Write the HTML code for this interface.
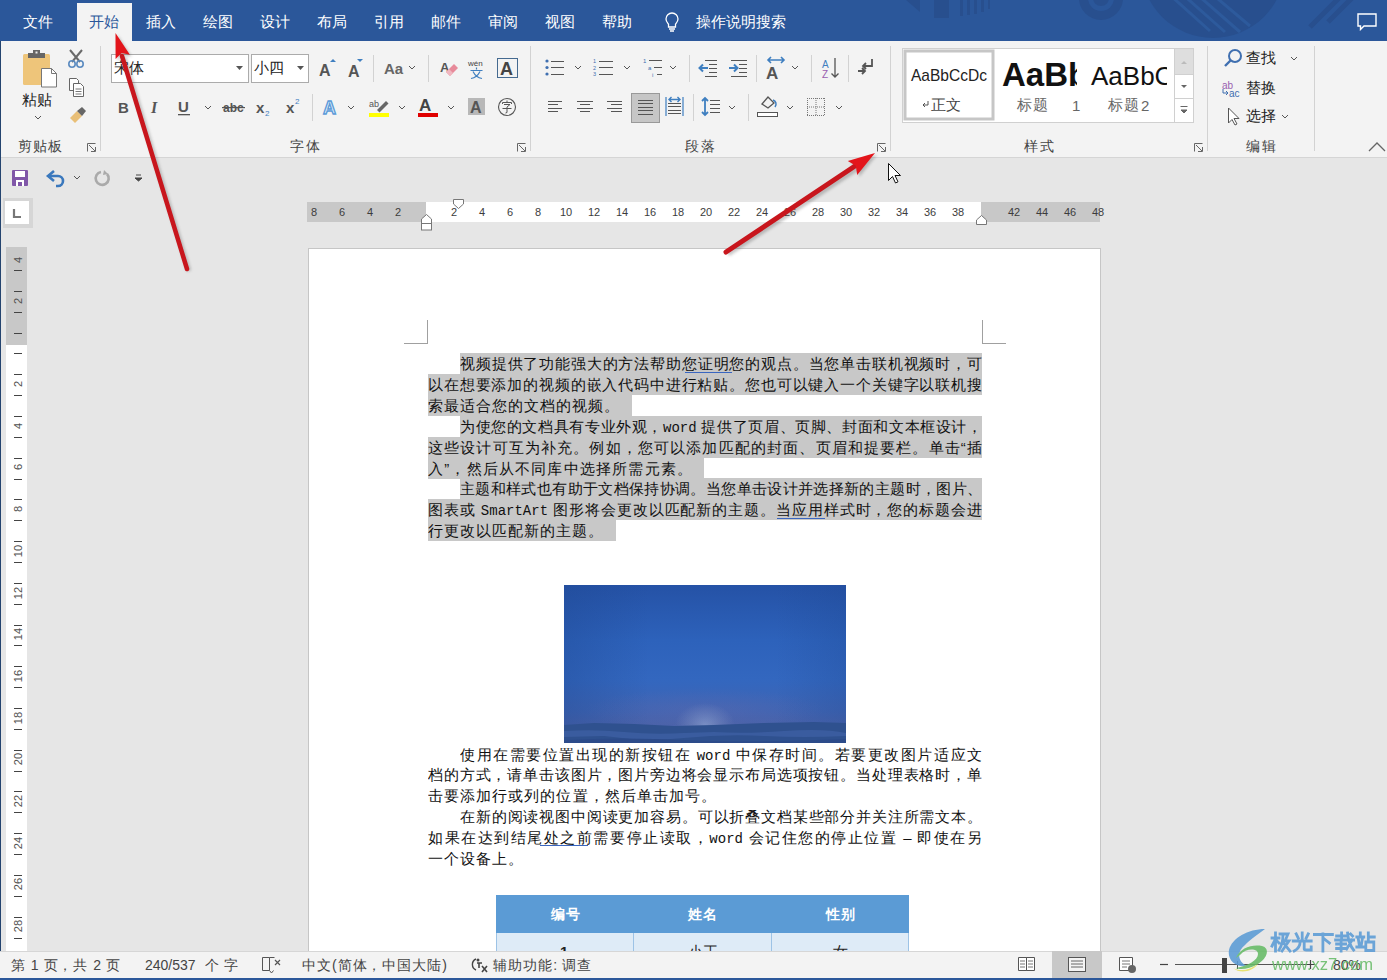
<!DOCTYPE html>
<html><head><meta charset="utf-8">
<style>
@font-face{font-family:"TofuBig";src:local("Liberation Sans");size-adjust:125%;unicode-range:U+3000-9FFF,U+FF00-FFEF}
*{margin:0;padding:0;box-sizing:border-box}
html,body{width:1387px;height:980px;overflow:hidden;background:#e6e6e6;font-family:"TofuBig","Liberation Sans",sans-serif;position:relative}
.a{position:absolute}
#title{left:0;top:0;width:1387px;height:41px;background:#2b579a;overflow:hidden}
.tab{position:absolute;top:12px;color:#fff;font-size:15px;line-height:20px;white-space:nowrap;width:30px;text-align:justify;text-align-last:justify}
.j{text-align:justify;text-align-last:justify;white-space:nowrap;overflow:visible}
#ribbon{left:0;top:41px;width:1387px;height:117px;background:#f3f3f3;border-bottom:1px solid #d5d5d5}
.sep{position:absolute;width:1px;background:#d0d0d0}
.gl{position:absolute;top:137px;font-size:14px;line-height:18px;color:#444;white-space:nowrap}
.launch{position:absolute;top:142px;width:10px;height:10px}
#page{left:308px;top:248px;width:793px;height:740px;background:#fff;border:1px solid #c6c6c6}
#status{left:0;top:951px;width:1387px;height:29px;background:#f3f3f3;border-top:1px solid #d6d6d6;border-bottom:2px solid #2b579a}
.st{position:absolute;top:6px;font-size:14px;line-height:16px;color:#444;white-space:nowrap}
.ln{position:absolute;height:21px;font-size:15px;line-height:21px;color:#111;white-space:nowrap;overflow:hidden;text-align:justify;text-align-last:justify}
.hl{background:#c8c8c8}
.m{font-family:"Liberation Mono",monospace;font-size:14px}
.rn{position:absolute;top:205px;font-size:11px;line-height:14px;color:#3c3c3c;width:20px;text-align:center}
</style></head><body>
<div id="title" class="a">
<svg class="a" style="left:0;top:0" width="1387" height="41">
<g fill="#284f8e">
<path d="M906 0h14v12z"/>
<rect x="934" y="0" width="15" height="18"/>
<rect x="960" y="0" width="3" height="16"/><rect x="967" y="0" width="3" height="15"/><rect x="974" y="0" width="3" height="14"/><rect x="981" y="0" width="3" height="12"/><rect x="988" y="0" width="2" height="9"/>
<circle cx="1101" cy="-2" r="22"/>
<circle cx="1213" cy="-34" r="72"/>
</g><g stroke="#284f8e" stroke-width="5"><path d="M1310 27l30-30M1328 22l26-26"/>
</g>
<circle cx="1101" cy="-2" r="13" fill="#2b579a"/>
<circle cx="1101" cy="-2" r="8" fill="#284f8e"/>
<g stroke="#2d5a9c" stroke-width="3">
<path d="M1170 -5l40 36M1180 -8l45 40M1192 -10l48 42M1205 -12l45 38"/>
</g>
</svg>
<div class="tab" style="left:23px">文件</div>
<div class="a" style="left:77px;top:3px;width:55px;height:38px;background:#f3f3f3"></div>
<div class="tab" style="left:89px;color:#2b579a">开始</div>
<div class="tab" style="left:146px">插入</div>
<div class="tab" style="left:203px">绘图</div>
<div class="tab" style="left:260px">设计</div>
<div class="tab" style="left:317px">布局</div>
<div class="tab" style="left:374px">引用</div>
<div class="tab" style="left:431px">邮件</div>
<div class="tab" style="left:488px">审阅</div>
<div class="tab" style="left:545px">视图</div>
<div class="tab" style="left:602px">帮助</div>
<svg class="a" style="left:662px;top:11px" width="20" height="22"><path d="M10 2a6 6 0 0 0-6 6c0 2.5 1.5 3.8 2.5 5.2V16h7v-2.8C14.5 11.8 16 10.5 16 8a6 6 0 0 0-6-6z" fill="none" stroke="#fff" stroke-width="1.3"/><path d="M7 18h6M8 20h4" stroke="#fff" stroke-width="1.3"/></svg>
<div class="tab" style="left:696px;width:90px">操作说明搜索</div>
<svg class="a" style="left:1357px;top:13px" width="20" height="18"><path d="M1 1h18v12H7l-3.5 3.5V13H1z" fill="none" stroke="#fff" stroke-width="1.4"/></svg>
</div>
<div id="ribbon" class="a">
<svg class="a" style="left:0;top:-41px" width="1387" height="160">
<!-- separators -->
<g fill="#d2d2d2">
<rect x="100" y="46" width="1" height="105"/>
<rect x="530" y="46" width="1" height="105"/>
<rect x="890" y="46" width="1" height="105"/>
<rect x="1207" y="46" width="1" height="105"/>
<rect x="1314" y="46" width="1" height="105"/>
<rect x="373" y="55" width="1" height="27"/>
<rect x="428" y="55" width="1" height="27"/>
<rect x="312" y="94" width="1" height="27"/>
<rect x="689" y="55" width="1" height="27"/>
<rect x="756" y="55" width="1" height="27"/>
<rect x="811" y="55" width="1" height="27"/>
<rect x="848" y="55" width="1" height="27"/>
<rect x="693" y="94" width="1" height="27"/>
<rect x="748" y="94" width="1" height="27"/>
</g>
<!-- launchers -->
<g fill="none" stroke="#666" stroke-width="1">
<path d="M87.5 151.5v-8h8 M89 145l6 6 M95.5 147v4.5H91"/>
<path d="M517.5 151.5v-8h8 M519 145l6 6 M525.5 147v4.5H521"/>
<path d="M877.5 151.5v-8h8 M879 145l6 6 M885.5 147v4.5H881"/>
<path d="M1194.5 151.5v-8h8 M1196 145l6 6 M1202.5 147v4.5H1198"/>
<path d="M1369 151l8-8 8 8" stroke-width="1.3"/>
</g>
<!-- paste -->
<rect x="23" y="54" width="27" height="31" rx="1.5" fill="#eec57a"/>
<rect x="28" y="53" width="17" height="5" fill="#666"/>
<rect x="33" y="50" width="7" height="4" fill="#666"/><rect x="35.5" y="51.5" width="2" height="2" fill="#eee"/>
<path d="M41.5 68.5h10l5 5v13.5h-15z" fill="#fff" stroke="#777"/>
<path d="M51.5 68.5v5h5" fill="none" stroke="#777"/>
<path d="M35 116l3 3 3-3" fill="none" stroke="#555" stroke-width="1"/>
<!-- scissors -->
<path d="M70 50l10 12 M82 50l-10 12" stroke="#6a6a6a" stroke-width="2"/>
<circle cx="72" cy="64" r="3.2" fill="none" stroke="#5b8bc0" stroke-width="1.6"/>
<circle cx="80" cy="64" r="3.2" fill="none" stroke="#5b8bc0" stroke-width="1.6"/>
<!-- copy -->
<path d="M69.5 78.5h7l2 2v10h-9z" fill="#fff" stroke="#666"/>
<path d="M73.5 83.5h7l3 3v10h-10z" fill="#fff" stroke="#666"/>
<path d="M75.5 89h6M75.5 91.5h6M75.5 94h6" stroke="#777" stroke-width="1"/>
<!-- format painter -->
<path d="M70 118l7-7 5 5-7 7z" fill="#e9bf77"/>
<path d="M77 111l5-4 4 4-4 5z" fill="#666"/>
<!-- font combos -->
<rect x="111.5" y="54.5" width="137" height="28" fill="#fff" stroke="#ababab"/>
<path d="M236 66h7l-3.5 4z" fill="#555"/>
<rect x="251.5" y="54.5" width="57" height="28" fill="#fff" stroke="#ababab"/>
<path d="M297 66h7l-3.5 4z" fill="#555"/>
<!-- grow/shrink -->
<text x="319" y="76" font-family="Liberation Sans" font-size="16" font-weight="bold" fill="#555">A</text>
<path d="M330 62l3-3 3 3z" fill="#3f7fc0"/>
<text x="348" y="77" font-family="Liberation Sans" font-size="16" font-weight="bold" fill="#555">A</text>
<path d="M357 59h6l-3 3z" fill="#3f7fc0"/>
<text x="384" y="74" font-family="Liberation Sans" font-size="15" font-weight="bold" fill="#666">Aa</text>
<path d="M409 66l3 3 3-3" fill="none" stroke="#555"/>
<!-- clear formatting -->
<text x="440" y="72" font-family="Liberation Sans" font-size="13" font-weight="bold" fill="#555">A</text>
<path d="M446 72l8-8 4 4-8 8z" fill="#e78a9a"/><path d="M446 72l3-3 4 4-3 3z" fill="#f0b7c0"/>
<!-- wen -->
<text x="468" y="66" font-family="Liberation Sans" font-size="8" fill="#444">wén</text>
<path d="M476.5 67.5v2M470.5 70.5h12M473 71.5q3 6 9 7M480 71.5q-3 6-9 7" fill="none" stroke="#3f7fc0" stroke-width="1.2"/>
<!-- boxed A -->
<rect x="497.5" y="58.5" width="20" height="19" fill="none" stroke="#456a90"/>
<text x="500" y="75" font-family="Liberation Sans" font-size="18" font-weight="bold" fill="#444">A</text>
<!-- row 2 font -->
<text x="118" y="113" font-family="Liberation Sans" font-size="15" font-weight="bold" fill="#555">B</text>
<text x="151" y="113" font-family="Liberation Serif" font-size="16" font-style="italic" font-weight="bold" fill="#555">I</text>
<text x="178" y="112" font-family="Liberation Sans" font-size="15" font-weight="bold" fill="#555">U</text>
<rect x="178" y="114" width="12" height="1.3" fill="#555"/>
<path d="M205 106l3 3 3-3" fill="none" stroke="#555"/>
<text x="223" y="112" font-family="Liberation Sans" font-size="12" font-weight="bold" fill="#555">abc</text>
<rect x="222" y="107" width="23" height="1.2" fill="#555"/>
<text x="256" y="113" font-family="Liberation Sans" font-size="15" font-weight="bold" fill="#555">x</text>
<text x="265" y="116" font-family="Liberation Sans" font-size="8" fill="#3f7fc0">2</text>
<text x="286" y="113" font-family="Liberation Sans" font-size="15" font-weight="bold" fill="#555">x</text>
<text x="295" y="104" font-family="Liberation Sans" font-size="8" fill="#3f7fc0">2</text>
<!-- text effect -->
<text x="323" y="114" font-family="Liberation Sans" font-size="18" font-weight="bold" fill="#dceaf8" stroke="#5a9ad8" stroke-width="1.3">A</text>
<path d="M348 106l3 3 3-3" fill="none" stroke="#555"/>
<!-- highlighter -->
<text x="369" y="107" font-family="Liberation Sans" font-size="9" fill="#555">ab</text>
<path d="M377 110l9-9 2.5 2.5-9 9z" fill="#666"/>
<rect x="369" y="113" width="20" height="4" fill="#ffff00"/>
<path d="M399 106l3 3 3-3" fill="none" stroke="#555"/>
<!-- font color -->
<text x="419" y="111" font-family="Liberation Sans" font-size="17" font-weight="bold" fill="#444">A</text>
<rect x="418" y="113" width="20" height="4" fill="#e00000"/>
<path d="M448 106l3 3 3-3" fill="none" stroke="#555"/>
<!-- shading -->
<rect x="468" y="98" width="17" height="17" fill="#b8b8b8"/>
<text x="470" y="113" font-family="Liberation Sans" font-size="16" font-weight="bold" fill="#555">A</text>
<!-- enclosed -->
<circle cx="507" cy="107" r="8.5" fill="none" stroke="#555" stroke-width="1.1"/>
<path d="M507 100.5v1.5M502.5 104v-1.5h9v1.5M504 104.5h6l-3 2.5M507 107v5.5l-1.5 0.5M502.5 108.5h9" fill="none" stroke="#555" stroke-width="1"/>
</svg>
<svg class="a" style="left:530px;top:0" width="857" height="160">
<g transform="translate(-530,-41)">
<!-- bullets -->
<g fill="#3f6fb0"><circle cx="547" cy="61" r="1.6"/><circle cx="547" cy="67.5" r="1.6"/><circle cx="547" cy="74" r="1.6"/></g>
<g stroke="#555" stroke-width="1"><path d="M551 61.5h13M551 67.5h13M551 74.5h13"/></g>
<path d="M575 66l3 3 3-3" fill="none" stroke="#555"/>
<!-- numbering -->
<g fill="#3f6fb0" font-family="Liberation Sans" font-size="5.5"><text x="593" y="63">1</text><text x="593" y="69.5">2</text><text x="593" y="76">3</text></g>
<g stroke="#555" stroke-width="1"><path d="M599 61.5h14M599 67.5h14M599 74.5h14"/></g>
<path d="M624 66l3 3 3-3" fill="none" stroke="#555"/>
<!-- multilevel -->
<g fill="#3f6fb0" font-family="Liberation Sans" font-size="6"><text x="643" y="63">1</text><text x="648" y="70">a</text><text x="652" y="77">i</text></g>
<g stroke="#555" stroke-width="1"><path d="M649 60.5h13M654 67.5h8M657 74.5h5"/></g>
<path d="M670 66l3 3 3-3" fill="none" stroke="#555"/>
<!-- decrease indent -->
<g stroke="#555" stroke-width="1"><path d="M705 60.5h12M709 64.5h8M709 68.5h8M709 72.5h8M705 76.5h12"/></g>
<path d="M708 68h-8M703 64.5l-3.5 3.5 3.5 3.5" fill="none" stroke="#3f7fc0" stroke-width="2"/>
<!-- increase indent -->
<g stroke="#555" stroke-width="1"><path d="M731 60.5h16M739 64.5h8M739 68.5h8M739 72.5h8M731 76.5h16"/></g>
<path d="M729 68h8M734 64.5l3.5 3.5-3.5 3.5" fill="none" stroke="#3f7fc0" stroke-width="2"/>
<!-- asian layout -->
<text x="766" y="79" font-family="Liberation Sans" font-size="17" font-weight="bold" fill="#555">A</text>
<path d="M768 60h16M771 57l-3 3 3 3M781 57l3 3-3 3" fill="none" stroke="#3f7fc0" stroke-width="1.6"/>
<path d="M792 66l3 3 3-3" fill="none" stroke="#555"/>
<!-- sort -->
<text x="822" y="68" font-family="Liberation Sans" font-size="10" fill="#3f7fc0">A</text>
<text x="822" y="78" font-family="Liberation Sans" font-size="10" fill="#9a5fb0">Z</text>
<path d="M835 58v19M831.5 73.5l3.5 3.5 3.5-3.5" fill="none" stroke="#555" stroke-width="1.3"/>
<!-- show marks -->
<path d="M872 59v7h-9M866 63l-3 3 3 3" fill="none" stroke="#555" stroke-width="1.8"/>
<path d="M858 71h7M862 68l3 3-3 3" fill="none" stroke="#555" stroke-width="1.8"/>
<!-- align row 2 -->
<g stroke="#555" stroke-width="1">
<path d="M548 101.5h14M548 104.5h10M548 108.5h14M548 111.5h10"/>
<path d="M577 101.5h16M580 104.5h10M577 108.5h16M580 111.5h10"/>
<path d="M607 101.5h15M611 104.5h11M607 108.5h15M611 111.5h11"/>
</g>
<rect x="631.5" y="93.5" width="28" height="29" fill="#c6c6c6" stroke="#999"/>
<g stroke="#555" stroke-width="1"><path d="M638 100.5h15M638 103.5h15M638 107.5h15M638 110.5h15M638 114.5h15"/></g>
<path d="M666 97v19M683 97v19" stroke="#3f7fc0" stroke-width="1.2"/>
<g stroke="#555" stroke-width="1"><path d="M668 103.5h13M668 106.5h13M668 110.5h13M668 113.5h13"/></g>
<path d="M669 99.5h11M671.5 97l-2.5 2.5 2.5 2.5M677.5 97l2.5 2.5-2.5 2.5" fill="none" stroke="#3f7fc0" stroke-width="1.4"/>
<!-- line spacing -->
<path d="M705 98v17M702 101l3-3 3 3M702 112l3 3 3-3" fill="none" stroke="#3f7fc0" stroke-width="1.8"/>
<g stroke="#555" stroke-width="1"><path d="M710 100.5h10M710 104.5h10M710 108.5h10M710 112.5h10"/></g>
<path d="M729 106l3 3 3-3" fill="none" stroke="#555"/>
<!-- shading -->
<path d="M762 104l6-7 6 6-6 5z" fill="none" stroke="#555" stroke-width="1.3"/>
<path d="M773 100c3 1 4 4 2 7" fill="none" stroke="#3f7fc0" stroke-width="1.5"/>
<rect x="757.5" y="112.5" width="20" height="4" fill="#fff" stroke="#555"/>
<path d="M787 106l3 3 3-3" fill="none" stroke="#555"/>
<!-- borders -->
<g stroke="#777" stroke-width="1" stroke-dasharray="1 1"><path d="M807 98.5h18M807 115.5h18M807.5 98v18M824.5 98v18M807 107h18M816 98v18"/></g>
<path d="M836 106l3 3 3-3" fill="none" stroke="#555"/>
<!-- styles gallery -->
<rect x="902.5" y="48.5" width="291" height="74" fill="#fff" stroke="#d0d0d0"/>
<rect x="905" y="51" width="88" height="68" fill="none" stroke="#c6c6c6" stroke-width="3"/>
<text x="911" y="81" font-family="Liberation Sans" font-size="17" fill="#222" textLength="76" lengthAdjust="spacingAndGlyphs">AaBbCcDc</text>
<rect x="1001" y="52" width="75" height="40" fill="none"/>
<svg x="1000" y="52" width="77" height="40"><text x="2" y="34" font-family="Liberation Sans" font-size="33" font-weight="bold" fill="#111">AaBb</text></svg>
<svg x="1090" y="52" width="77" height="40"><text x="1" y="33" font-family="Liberation Sans" font-size="26" fill="#111">AaBbC</text></svg>
<path d="M928 101v4h-5M925 103l-2 2 2 2" fill="none" stroke="#444" stroke-width="0.9"/>
<text x="1072" y="111" font-family="Liberation Sans" font-size="15" fill="#666">1</text>
<text x="1141" y="111" font-family="Liberation Sans" font-size="15" fill="#666">2</text>
<rect x="1175" y="49" width="18" height="25" fill="#dedede"/>
<path d="M1174.5 49v73.5M1175 74.5h18M1175 98.5h18" stroke="#d0d0d0"/>
<path d="M1181 64l3-3 3 3z" fill="#bbb"/>
<path d="M1181 85h6l-3 3z" fill="#666"/>
<path d="M1180.5 106.5h7M1181 110h6l-3 3z" stroke="#666" fill="#666"/>
<!-- find -->
<circle cx="1235" cy="56" r="6" fill="none" stroke="#3f6fb0" stroke-width="2"/>
<path d="M1231 60l-6 6" stroke="#3f6fb0" stroke-width="2.4"/>
<path d="M1291 57l3 3 3-3" fill="none" stroke="#555"/>
<text x="1222" y="89" font-family="Liberation Sans" font-size="10" fill="#9a5fb0">ab</text>
<text x="1229" y="97" font-family="Liberation Sans" font-size="10" fill="#3f6fb0">ac</text>
<path d="M1223 89v4h5M1226 91l2 2-2 2" fill="none" stroke="#3f6fb0" stroke-width="1"/>
<path d="M1228.5 108v15l3.5-3.5 3 5.5 2-1-3-5.5h5z" fill="#fff" stroke="#555" stroke-width="1"/>
<path d="M1282 115l3 3 3-3" fill="none" stroke="#555"/>
</g></svg>
<div class="a j" style="left:1246px;top:8px;width:30px;font-size:15px;line-height:18px;color:#222">查找</div>
<div class="a j" style="left:1246px;top:38px;width:30px;font-size:15px;line-height:18px;color:#222">替换</div>
<div class="a j" style="left:1246px;top:66px;width:30px;font-size:15px;line-height:18px;color:#222">选择</div>
<div class="a j" style="left:931px;top:55px;width:30px;font-size:15px;line-height:18px;color:#444">正文</div>
<div class="a j" style="left:1017px;top:55px;width:31px;font-size:15px;line-height:18px;color:#666">标题</div>
<div class="a j" style="left:1108px;top:55px;width:31px;font-size:15px;line-height:18px;color:#666">标题</div>
<div class="a j" style="left:22px;top:50px;width:30px;font-size:15px;line-height:18px;color:#222">粘贴</div>
<div class="a j gl" style="left:18px;top:96px;width:44px">剪贴板</div>
<div class="a j" style="left:114px;top:18px;width:30px;font-size:15px;line-height:18px;color:#222">宋体</div>
<div class="a j" style="left:254px;top:18px;width:30px;font-size:15px;line-height:18px;color:#222">小四</div>
<div class="a j gl" style="left:290px;top:96px;width:30px">字体</div>
<div class="a j gl" style="left:685px;top:96px;width:30px">段落</div>
<div class="a j gl" style="left:1024px;top:96px;width:30px">样式</div>
<div class="a j gl" style="left:1246px;top:96px;width:30px">编辑</div>
</div>
<div class="a" style="left:0;top:41px;width:1px;height:939px;background:#24446f"></div>

<!-- QAT -->
<svg class="a" style="left:0;top:158px" width="160" height="40">
<g transform="translate(0,-158)">
<rect x="12" y="170" width="16" height="16" rx="1" fill="#8057a8"/>
<rect x="15" y="171" width="10" height="6" fill="#fff"/>
<rect x="16" y="180" width="8" height="6" fill="#fff"/><rect x="18" y="182" width="4" height="4" fill="#8057a8"/>
<path d="M50 176h8a5 5 0 0 1 0 10h-2" fill="none" stroke="#3a78bd" stroke-width="2.6"/>
<path d="M54 171l-6 5 6 5" fill="none" stroke="#3a78bd" stroke-width="2.6"/>
<path d="M74 176l3 3 3-3" fill="none" stroke="#555"/>
<path d="M101 172a6.5 6.5 0 1 0 6 2" fill="none" stroke="#aaa" stroke-width="2.6"/>
<path d="M104 170l4 4-5 1z" fill="#aaa"/>
<path d="M136 175h5M135 178h7l-3.5 3z" stroke="#444" fill="#444" stroke-width="1"/>
</g></svg>
<!-- ruler corner -->
<div class="a" style="left:3px;top:198px;width:30px;height:30px;background:#d6d6d6"></div>
<div class="a" style="left:5px;top:201px;width:24px;height:23px;background:#fff"></div>
<svg class="a" style="left:12px;top:207px" width="12" height="12"><path d="M2 2v8h7" fill="none" stroke="#777" stroke-width="2.2"/></svg>
<!-- horizontal ruler -->
<div class="a" style="left:307px;top:202px;width:793px;height:20px;background:#c8c8c8"></div>
<div class="a" style="left:426px;top:202px;width:555px;height:20px;background:#fff"></div>
<div class="rn" style="left:304px">8</div><div class="rn" style="left:332px">6</div><div class="rn" style="left:360px">4</div><div class="rn" style="left:388px">2</div><div class="rn" style="left:444px">2</div><div class="rn" style="left:472px">4</div><div class="rn" style="left:500px">6</div><div class="rn" style="left:528px">8</div><div class="rn" style="left:556px">10</div><div class="rn" style="left:584px">12</div><div class="rn" style="left:612px">14</div><div class="rn" style="left:640px">16</div><div class="rn" style="left:668px">18</div><div class="rn" style="left:696px">20</div><div class="rn" style="left:724px">22</div><div class="rn" style="left:752px">24</div><div class="rn" style="left:780px">26</div><div class="rn" style="left:808px">28</div><div class="rn" style="left:836px">30</div><div class="rn" style="left:864px">32</div><div class="rn" style="left:892px">34</div><div class="rn" style="left:920px">36</div><div class="rn" style="left:948px">38</div><div class="rn" style="left:1004px">42</div><div class="rn" style="left:1032px">44</div><div class="rn" style="left:1060px">46</div><div class="rn" style="left:1088px">48</div>
<svg class="a" style="left:415px;top:196px" width="580" height="36">
<g transform="translate(-415,-196)">
<path d="M453.5 199.5h10v4.5l-5 4.5-5-4.5z" fill="#fff" stroke="#777"/>
<path d="M421.5 223.5v-4.5l5-4.5 5 4.5v4.5z" fill="#fff" stroke="#777"/>
<rect x="421.5" y="223.5" width="10" height="6.5" fill="#fff" stroke="#777"/>
<path d="M976.5 224.5v-4.5l5-4.5 5 4.5v4.5z" fill="#fff" stroke="#777"/>
</g></svg>
<!-- vertical ruler -->
<div class="a" style="left:6px;top:247px;width:21px;height:704px;background:#fff"></div>
<div class="a" style="left:6px;top:247px;width:21px;height:98px;background:#c8c8c8"></div>
<div class="a" style="left:8px;top:250.0px;width:20px;height:20px;font-size:11px;line-height:20px;color:#505050;text-align:center;transform:rotate(-90deg)">4</div><div class="a" style="left:8px;top:291.0px;width:20px;height:20px;font-size:11px;line-height:20px;color:#505050;text-align:center;transform:rotate(-90deg)">2</div><div class="a" style="left:8px;top:374.0px;width:20px;height:20px;font-size:11px;line-height:20px;color:#505050;text-align:center;transform:rotate(-90deg)">2</div><div class="a" style="left:8px;top:415.7px;width:20px;height:20px;font-size:11px;line-height:20px;color:#505050;text-align:center;transform:rotate(-90deg)">4</div><div class="a" style="left:8px;top:457.4px;width:20px;height:20px;font-size:11px;line-height:20px;color:#505050;text-align:center;transform:rotate(-90deg)">6</div><div class="a" style="left:8px;top:499.1px;width:20px;height:20px;font-size:11px;line-height:20px;color:#505050;text-align:center;transform:rotate(-90deg)">8</div><div class="a" style="left:8px;top:540.8px;width:20px;height:20px;font-size:11px;line-height:20px;color:#505050;text-align:center;transform:rotate(-90deg)">10</div><div class="a" style="left:8px;top:582.5px;width:20px;height:20px;font-size:11px;line-height:20px;color:#505050;text-align:center;transform:rotate(-90deg)">12</div><div class="a" style="left:8px;top:624.2px;width:20px;height:20px;font-size:11px;line-height:20px;color:#505050;text-align:center;transform:rotate(-90deg)">14</div><div class="a" style="left:8px;top:665.9px;width:20px;height:20px;font-size:11px;line-height:20px;color:#505050;text-align:center;transform:rotate(-90deg)">16</div><div class="a" style="left:8px;top:707.6px;width:20px;height:20px;font-size:11px;line-height:20px;color:#505050;text-align:center;transform:rotate(-90deg)">18</div><div class="a" style="left:8px;top:749.3px;width:20px;height:20px;font-size:11px;line-height:20px;color:#505050;text-align:center;transform:rotate(-90deg)">20</div><div class="a" style="left:8px;top:791.0px;width:20px;height:20px;font-size:11px;line-height:20px;color:#505050;text-align:center;transform:rotate(-90deg)">22</div><div class="a" style="left:8px;top:832.7px;width:20px;height:20px;font-size:11px;line-height:20px;color:#505050;text-align:center;transform:rotate(-90deg)">24</div><div class="a" style="left:8px;top:874.4px;width:20px;height:20px;font-size:11px;line-height:20px;color:#505050;text-align:center;transform:rotate(-90deg)">26</div><div class="a" style="left:8px;top:916.1px;width:20px;height:20px;font-size:11px;line-height:20px;color:#505050;text-align:center;transform:rotate(-90deg)">28</div>
<div class="a" style="left:14px;top:270px;width:8px;height:1px;background:#444"></div><div class="a" style="left:14px;top:291px;width:8px;height:1px;background:#444"></div><div class="a" style="left:14px;top:312px;width:8px;height:1px;background:#444"></div><div class="a" style="left:14px;top:333px;width:8px;height:1px;background:#444"></div><div class="a" style="left:14px;top:353px;width:8px;height:1px;background:#444"></div><div class="a" style="left:14px;top:374px;width:8px;height:1px;background:#444"></div><div class="a" style="left:14px;top:395px;width:8px;height:1px;background:#444"></div><div class="a" style="left:14px;top:416px;width:8px;height:1px;background:#444"></div><div class="a" style="left:14px;top:437px;width:8px;height:1px;background:#444"></div><div class="a" style="left:14px;top:458px;width:8px;height:1px;background:#444"></div><div class="a" style="left:14px;top:479px;width:8px;height:1px;background:#444"></div><div class="a" style="left:14px;top:499px;width:8px;height:1px;background:#444"></div><div class="a" style="left:14px;top:520px;width:8px;height:1px;background:#444"></div><div class="a" style="left:14px;top:541px;width:8px;height:1px;background:#444"></div><div class="a" style="left:14px;top:562px;width:8px;height:1px;background:#444"></div><div class="a" style="left:14px;top:583px;width:8px;height:1px;background:#444"></div><div class="a" style="left:14px;top:604px;width:8px;height:1px;background:#444"></div><div class="a" style="left:14px;top:625px;width:8px;height:1px;background:#444"></div><div class="a" style="left:14px;top:645px;width:8px;height:1px;background:#444"></div><div class="a" style="left:14px;top:666px;width:8px;height:1px;background:#444"></div><div class="a" style="left:14px;top:687px;width:8px;height:1px;background:#444"></div><div class="a" style="left:14px;top:708px;width:8px;height:1px;background:#444"></div><div class="a" style="left:14px;top:729px;width:8px;height:1px;background:#444"></div><div class="a" style="left:14px;top:750px;width:8px;height:1px;background:#444"></div><div class="a" style="left:14px;top:771px;width:8px;height:1px;background:#444"></div><div class="a" style="left:14px;top:791px;width:8px;height:1px;background:#444"></div><div class="a" style="left:14px;top:812px;width:8px;height:1px;background:#444"></div><div class="a" style="left:14px;top:833px;width:8px;height:1px;background:#444"></div><div class="a" style="left:14px;top:854px;width:8px;height:1px;background:#444"></div><div class="a" style="left:14px;top:875px;width:8px;height:1px;background:#444"></div><div class="a" style="left:14px;top:896px;width:8px;height:1px;background:#444"></div><div class="a" style="left:14px;top:917px;width:8px;height:1px;background:#444"></div><div class="a" style="left:14px;top:938px;width:8px;height:1px;background:#444"></div><div id="page" class="a"></div>

<!-- corner marks -->
<div class="a" style="left:427px;top:320px;width:1px;height:24px;background:#a0a0a0"></div>
<div class="a" style="left:404px;top:343px;width:24px;height:1px;background:#a0a0a0"></div>
<div class="a" style="left:982px;top:320px;width:1px;height:24px;background:#a0a0a0"></div>
<div class="a" style="left:982px;top:343px;width:24px;height:1px;background:#a0a0a0"></div>
<div class="ln hl" style="left:460px;top:353.2px;width:522px"><div style="width:522px;text-align:justify;text-align-last:justify;overflow:hidden">视频提供了功能强大的方法帮助您证明您的观点。当您单击联机视频时，可</div></div>
<div class="ln hl" style="left:428px;top:374.1px;width:554px"><div style="width:554px;text-align:justify;text-align-last:justify;overflow:hidden">以在想要添加的视频的嵌入代码中进行粘贴。您也可以键入一个关键字以联机搜</div></div>
<div class="ln hl" style="left:428px;top:394.9px;width:204px"><div style="width:191px;text-align:justify;text-align-last:justify;overflow:hidden">索最适合您的文档的视频。</div></div>
<div class="ln hl" style="left:460px;top:415.8px;width:522px"><div style="width:522px;text-align:justify;text-align-last:justify;overflow:hidden">为使您的文档具有专业外观，<span class="m">word</span> 提供了页眉、页脚、封面和文本框设计，</div></div>
<div class="ln hl" style="left:428px;top:436.6px;width:554px"><div style="width:554px;text-align:justify;text-align-last:justify;overflow:hidden">这些设计可互为补充。例如，您可以添加匹配的封面、页眉和提要栏。单击“插</div></div>
<div class="ln hl" style="left:428px;top:457.5px;width:276px"><div style="width:264px;text-align:justify;text-align-last:justify;overflow:hidden">入”，然后从不同库中选择所需元素。</div></div>
<div class="ln hl" style="left:460px;top:478.4px;width:522px"><div style="width:522px;text-align:justify;text-align-last:justify;overflow:hidden">主题和样式也有助于文档保持协调。当您单击设计并选择新的主题时，图片、</div></div>
<div class="ln hl" style="left:428px;top:499.2px;width:554px"><div style="width:554px;text-align:justify;text-align-last:justify;overflow:hidden">图表或 <span class="m">SmartArt</span> 图形将会更改以匹配新的主题。当应用样式时，您的标题会进</div></div>
<div class="ln hl" style="left:428px;top:520.1px;width:188px"><div style="width:175px;text-align:justify;text-align-last:justify;overflow:hidden">行更改以匹配新的主题。</div></div>
<div class="ln" style="left:460px;top:743.5px;width:522px"><div style="width:522px;text-align:justify;text-align-last:justify;overflow:hidden">使用在需要位置出现的新按钮在 <span class="m">word</span> 中保存时间。若要更改图片适应文</div></div>
<div class="ln" style="left:428px;top:764.4px;width:554px"><div style="width:554px;text-align:justify;text-align-last:justify;overflow:hidden">档的方式，请单击该图片，图片旁边将会显示布局选项按钮。当处理表格时，单</div></div>
<div class="ln" style="left:428px;top:785.2px;width:292px"><div style="width:288px;text-align:justify;text-align-last:justify;overflow:hidden">击要添加行或列的位置，然后单击加号。</div></div>
<div class="ln" style="left:460px;top:806.1px;width:522px"><div style="width:522px;text-align:justify;text-align-last:justify;overflow:hidden">在新的阅读视图中阅读更加容易。可以折叠文档某些部分并关注所需文本。</div></div>
<div class="ln" style="left:428px;top:826.9px;width:554px"><div style="width:554px;text-align:justify;text-align-last:justify;overflow:hidden">如果在达到结尾处之前需要停止读取，<span class="m">word</span> 会记住您的停止位置 – 即使在另</div></div>
<div class="ln" style="left:428px;top:847.8px;width:102px"><div style="width:95px;text-align:justify;text-align-last:justify;overflow:hidden">一个设备上。</div></div>

<!-- underlines -->
<div class="a" style="left:685px;top:372px;width:47px;height:1px;background:#3a66c0"></div>
<div class="a" style="left:777px;top:518px;width:48px;height:1px;background:#3a66c0"></div>
<div class="a" style="left:540px;top:845px;width:48px;height:1px;background:#3a66c0"></div>
<!-- image -->
<svg class="a" style="left:564px;top:585px" width="282" height="158">
<defs>
<linearGradient id="sky" x1="0" y1="0" x2="0" y2="1">
<stop offset="0" stop-color="#2552a6"/><stop offset="0.35" stop-color="#2d62bb"/><stop offset="0.6" stop-color="#3367bf"/><stop offset="0.8" stop-color="#3f64b2"/><stop offset="0.88" stop-color="#4862aa"/><stop offset="1" stop-color="#3d5ea6"/>
</linearGradient>
<linearGradient id="lside" x1="0" y1="0" x2="1" y2="0"><stop offset="0" stop-color="#1e468f" stop-opacity="0.35"/><stop offset="0.3" stop-color="#1e468f" stop-opacity="0"/><stop offset="0.75" stop-color="#1e468f" stop-opacity="0"/><stop offset="1" stop-color="#1e468f" stop-opacity="0.25"/></linearGradient>
<radialGradient id="glow" cx="0.5" cy="0.5" r="0.5"><stop offset="0" stop-color="#a8bce0" stop-opacity="0.7"/><stop offset="1" stop-color="#9aa6c8" stop-opacity="0"/></radialGradient>
<radialGradient id="pink" cx="0.5" cy="0.5" r="0.5"><stop offset="0" stop-color="#8a70a8" stop-opacity="0.18"/><stop offset="1" stop-color="#8a70a8" stop-opacity="0"/></radialGradient>
</defs>
<rect width="282" height="158" fill="url(#sky)"/>
<rect width="282" height="158" fill="url(#lside)"/>
<ellipse cx="141" cy="125" rx="120" ry="22" fill="url(#pink)"/>
<ellipse cx="141" cy="140" rx="30" ry="22" fill="url(#glow)" opacity="0.7"/>
<path d="M0 140 L30 138 L70 139 L110 141 L150 140 L200 138 L250 137 L282 138 V158 H0z" fill="#2f518f"/>
<path d="M0 146 Q30 144 60 147 T120 148 L150 147 Q180 149 220 146 T282 148 V151 Q240 153 200 151 T120 153 T40 151 L0 152z" fill="#3d5fa3" opacity="0.8"/>
<path d="M0 155 Q60 152 120 155 T282 154 V158 H0z" fill="#2c4b8a"/>
</svg>
<!-- table -->
<div class="a" style="left:496px;top:895px;width:413px;height:38px;background:#5b9bd5"></div>
<div class="a j" style="left:551px;top:906px;width:29px;font-size:14px;line-height:16px;color:#fff;font-weight:bold">编号</div>
<div class="a j" style="left:688px;top:906px;width:29px;font-size:14px;line-height:16px;color:#fff;font-weight:bold">姓名</div>
<div class="a j" style="left:826px;top:906px;width:29px;font-size:14px;line-height:16px;color:#fff;font-weight:bold">性别</div>
<div class="a" style="left:496px;top:933px;width:413px;height:20px;background:#deebf7;border-left:1px solid #9dc3e6;border-right:1px solid #9dc3e6"></div>
<div class="a" style="left:633px;top:933px;width:1px;height:20px;background:#9dc3e6"></div>
<div class="a" style="left:771px;top:933px;width:1px;height:20px;background:#9dc3e6"></div>
<div class="a" style="left:560px;top:944px;font-size:15px;line-height:16px;color:#222;font-weight:bold">1</div>
<div class="a j" style="left:688px;top:944px;width:29px;font-size:15px;line-height:16px;color:#222">小王</div>
<div class="a" style="left:833px;top:944px;font-size:15px;line-height:16px;color:#222">女</div>
<div id="status" class="a"></div>
<div class="a st j" style="left:11px;top:957px;width:109px">第 1 页，共 2 页</div>
<div class="a st j" style="left:145px;top:957px;width:93px">240/537 个字</div>
<svg class="a" style="left:260px;top:956px" width="22" height="18"><path d="M2.5 1.5h7v13h-7zM9.5 1.5h5" fill="none" stroke="#555"/><path d="M9.5 14.5l2 2.5 2-2.5" fill="none" stroke="#555"/><path d="M15 4l5 5M20 4l-5 5" stroke="#555" stroke-width="1.2"/></svg>
<div class="a st j" style="left:302px;top:957px;width:145px">中文(简体，中国大陆)</div>
<svg class="a" style="left:469px;top:956px" width="20" height="18"><path d="M7 3a6 6 0 0 0 0 11" fill="none" stroke="#444" stroke-width="1.4"/><circle cx="9" cy="4" r="1.5" fill="#444"/><path d="M8 7h5M10 7v5M13 10l5 6M18 10l-5 6" stroke="#444" stroke-width="1.6"/></svg>
<div class="a st j" style="left:493px;top:957px;width:98px">辅助功能: 调查</div>
<svg class="a" style="left:1010px;top:951px" width="377" height="27">
<g transform="translate(-1010,-951)">
<path d="M1018.5 957.5h8v13h-8zM1026.5 957.5h8v13h-8z" fill="#fff" stroke="#555"/>
<path d="M1020 961h5M1020 964h5M1020 967h5M1028 961h5M1028 964h5M1028 967h5" stroke="#777"/>
<rect x="1052" y="951" width="50" height="27" fill="#c8c8c8"/>
<rect x="1068.5" y="957.5" width="17" height="14" fill="#f3f3f3" stroke="#555"/>
<path d="M1071 961h12M1071 964h12M1071 967h12" stroke="#666"/>
<path d="M1119.5 957.5h13v13h-13z" fill="#fff" stroke="#555"/>
<path d="M1122 961h8M1122 964h8M1122 967h5" stroke="#777"/>
<circle cx="1132" cy="969" r="4" fill="#666"/>
<path d="M1160 964.5h8" stroke="#444" stroke-width="1.2"/>
<rect x="1175" y="964" width="135" height="1" fill="#555"/>
<rect x="1222" y="958" width="5" height="15" fill="#444"/>
<rect x="1237" y="961" width="1" height="8" fill="#555"/>
<path d="M1306 964.5h9M1310.5 960v9" stroke="#444" stroke-width="1.2"/>
</g></svg>
<div class="a st" style="left:1333px;top:957px;font-size:14px">80%</div>
<!-- watermark -->
<svg class="a" style="left:0;top:0;pointer-events:none" width="1387" height="980">
<g opacity="0.88">
<path d="M1265 929 C1248 929 1232 938 1229 950 C1227 960 1236 968 1247 966 C1238 962 1236 952 1245 945 C1250 940 1258 934 1265 929Z" fill="#5b9bd5"/>
<path d="M1236 958 C1240 948 1252 944 1262 946 C1270 948 1268 958 1258 964 C1250 969 1240 970 1236 968 C1248 966 1258 960 1258 954 C1258 948 1246 948 1240 955Z" fill="#66bb66"/>
<path d="M1233 968 C1240 972 1250 970 1258 964 C1252 972 1240 974 1233 968Z" fill="#e8e060"/>
<g fill="none" stroke="#5b9bd5" stroke-width="2.8" stroke-linecap="square"><path transform="translate(1271.0,932)" d="M1 6H8M4.5 1V19M4.5 7L1 14M5 8L8 11M9 2H17L14 9H18L11 19M12 2Q12 12 8 18M12.5 11L19 19"/><path transform="translate(1292.2,932)" d="M10 1V8M4 2L6 6M16 2L14 6M1 9H19M8 9Q8 16 2 19M12 9V17Q12 18 14 18H19V15"/><path transform="translate(1313.4,932)" d="M1 2.5H19M9.5 2V19M11 7L16 11"/><path transform="translate(1334.6,932)" d="M2 4H13M1 8H19M7 1V8M2 12H11M6.5 9V19M2 16.5H11M13 1Q14 12 19 18M17.5 8L12 17M16 2L18 4"/><path transform="translate(1355.8,932)" d="M4.5 1V4M1 5H8M2.5 7L3.5 13M6.5 7L5.5 13M1 15H8M12.5 1V9M12.5 5H18.5M10 10H18V18.5H10Z"/></g>
<text x="1272" y="970" font-family="Liberation Sans" font-size="17" fill="#66bb66" textLength="101" lengthAdjust="spacingAndGlyphs">www.xz7.com</text>
</g>
</svg>
<!-- arrows -->
<svg class="a" style="left:0;top:0;pointer-events:none" width="1387" height="980">
<defs><filter id="sh" x="-20%" y="-20%" width="140%" height="140%"><feGaussianBlur stdDeviation="1.5"/></filter></defs>
<g opacity="0.3" filter="url(#sh)" transform="translate(2,2)">
<line x1="187" y1="269" x2="122" y2="55" stroke="#444" stroke-width="4.5"/>
<path d="M115.5 33 L129.9 54.8 L121.6 53.1 L115.6 59.1 Z" fill="#444"/>
<line x1="726" y1="252" x2="856" y2="166" stroke="#444" stroke-width="5"/>
<path d="M875 153 L857.2 175 L855.8 165.7 L847.8 160.9 Z" fill="#444"/>
</g>
<line x1="187" y1="269" x2="122" y2="56" stroke="#c8161d" stroke-width="4.5" stroke-linecap="round"/>
<path d="M115.5 33 L129.9 54.8 L121.6 53.1 L115.6 59.1 Z" fill="#e3151b"/>
<line x1="726" y1="252" x2="855" y2="166" stroke="#c8161d" stroke-width="5" stroke-linecap="round"/>
<path d="M875 153 L857.2 175 L855.8 165.7 L847.8 160.9 Z" fill="#e3151b"/>
<!-- cursor -->
<path d="M888.5 163.5v17l4-4 3 6.5 2.5-1.2-3-6.3h5.5z" fill="#fff" stroke="#111" stroke-width="1"/>
</svg>
</body></html>
